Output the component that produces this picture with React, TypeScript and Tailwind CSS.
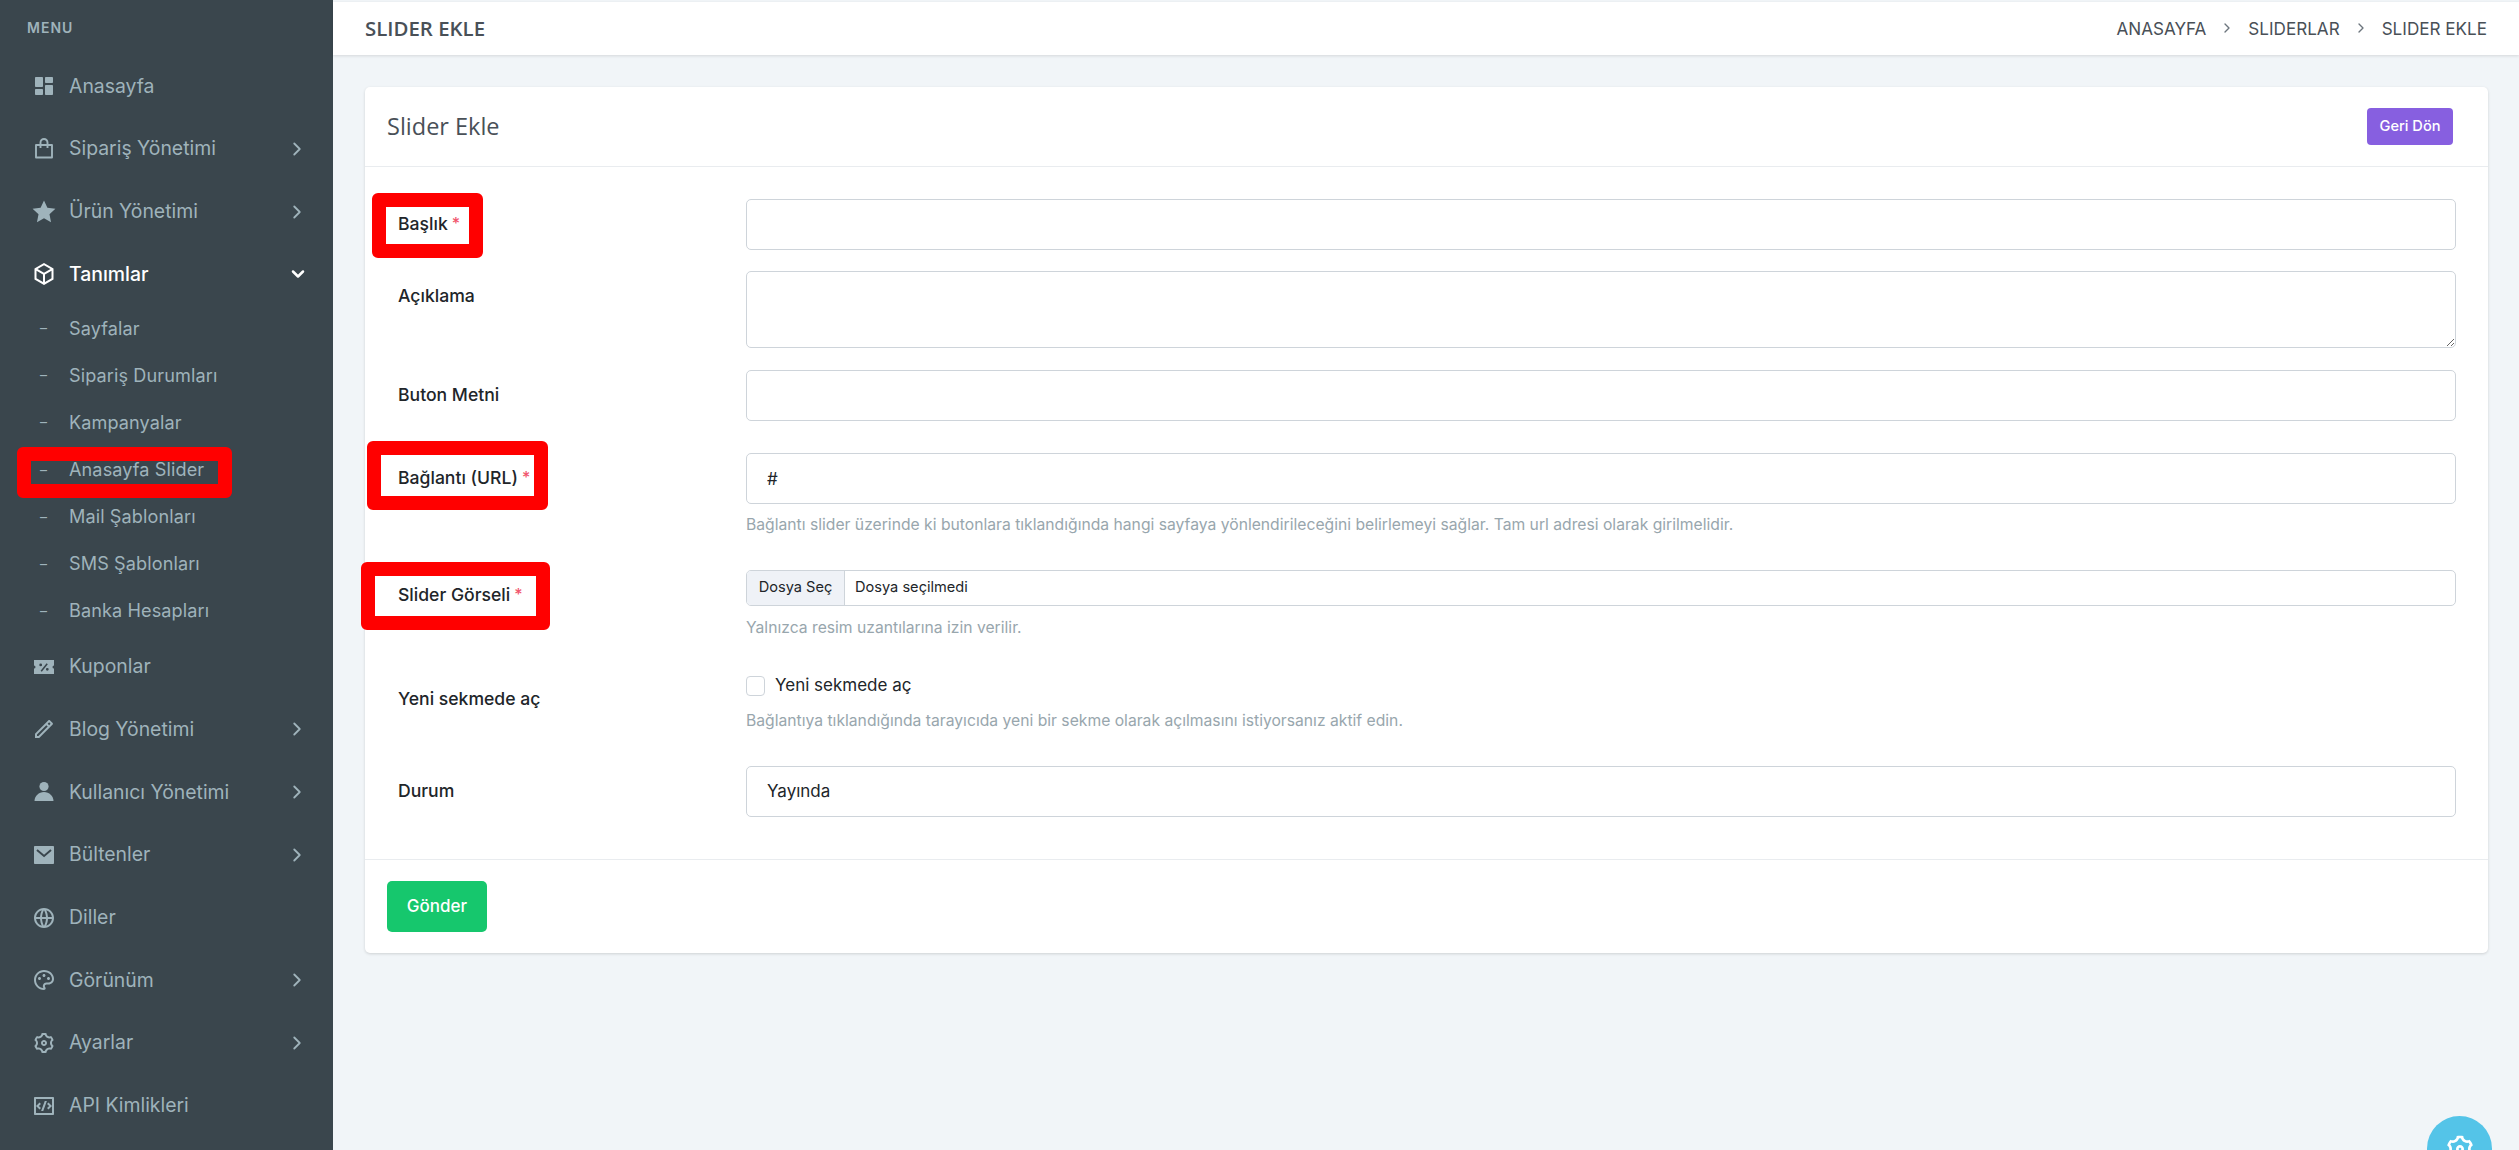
import React from 'react';
import { ChevronRight, ChevronDown } from 'lucide-react';
import {
  RiDashboardFill, RiStarFill, RiBox3Line, RiPencilLine,
  RiMailFill, RiGlobalLine, RiPaletteLine, RiSettings3Line, RiCodeBoxLine,
} from 'react-icons/ri';

type Item = { label: string; icon?: React.ElementType; chevron?: boolean; open?: boolean; sub?: boolean; boxed?: boolean };

const BagIcon = ({ size = 24, className }: { size?: number; className?: string }) => (
  <svg width={size} height={size} viewBox="0 0 24 24" fill="none" stroke="currentColor" strokeWidth="1.9" className={className}>
    <path d="M4 8h16v12.5H4z" strokeLinejoin="round" />
    <path d="M8.5 11V5.5a3.5 3.5 0 0 1 7 0V11" />
  </svg>
);

const CouponIcon = ({ size = 24, className }: { size?: number; className?: string }) => (
  <svg width={size} height={size} viewBox="0 0 24 24" fill="currentColor" className={className}>
    <path fillRule="evenodd" d="M2 5h20v5.5a1.5 1.5 0 0 0 0 3V19H2v-5.5a1.5 1.5 0 0 0 0-3V5zm12.6 3.2L8.6 15.8l1.2 1 6-7.6-1.2-1zM8.7 8.5a1.4 1.4 0 1 0 0 2.8 1.4 1.4 0 0 0 0-2.8zm6.6 4.4a1.4 1.4 0 1 0 0 2.8 1.4 1.4 0 0 0 0-2.8z" />
  </svg>
);

const UserIcon = ({ size = 24, className }: { size?: number; className?: string }) => (
  <svg width={size} height={size} viewBox="0 0 24 24" fill="currentColor" className={className}>
    <circle cx="12" cy="6.5" r="4.6" />
    <path d="M2.5 21c0-5 4.3-9 9.5-9s9.5 4 9.5 9H2.5z" />
  </svg>
);

const menu: Item[] = [
  { label: 'Anasayfa', icon: RiDashboardFill },
  { label: 'Sipariş Yönetimi', icon: BagIcon, chevron: true },
  { label: 'Ürün Yönetimi', icon: RiStarFill, chevron: true },
  { label: 'Tanımlar', icon: RiBox3Line, chevron: true, open: true },
  { label: 'Sayfalar', sub: true },
  { label: 'Sipariş Durumları', sub: true },
  { label: 'Kampanyalar', sub: true },
  { label: 'Anasayfa Slider', sub: true, boxed: true },
  { label: 'Mail Şablonları', sub: true },
  { label: 'SMS Şablonları', sub: true },
  { label: 'Banka Hesapları', sub: true },
  { label: 'Kuponlar', icon: CouponIcon },
  { label: 'Blog Yönetimi', icon: RiPencilLine, chevron: true },
  { label: 'Kullanıcı Yönetimi', icon: UserIcon, chevron: true },
  { label: 'Bültenler', icon: RiMailFill, chevron: true },
  { label: 'Diller', icon: RiGlobalLine },
  { label: 'Görünüm', icon: RiPaletteLine, chevron: true },
  { label: 'Ayarlar', icon: RiSettings3Line, chevron: true },
  { label: 'API Kimlikleri', icon: RiCodeBoxLine },
];

const MenuRow = ({ item }: { item: Item }) => {
  if (item.sub) {
    return (
      <div className="relative flex h-[47.1px] items-center pb-[2px] pl-[40px] text-[18.1px] tracking-[0.1px] text-[#9fb3bb]">
        <span className="w-[29px] text-[14px] leading-none">–</span>
        <span>{item.label}</span>
        {item.boxed && (
          <div className="absolute left-[17px] top-[0px] h-[51px] w-[215px] rounded-[6px] border-[14px] border-[#ff0000]" />
        )}
      </div>
    );
  }
  const Icon = item.icon!;
  return (
    <div className={`flex h-[62.7px] items-center pl-[32px] pr-[25px] text-[19.4px] ${item.open ? 'font-medium text-white' : 'text-[#9fb3bb]'}`}>
      <Icon size={24} className="mr-[13px] shrink-0" />
      <span className="flex-1">{item.label}</span>
      {item.chevron && (item.open ? <ChevronDown size={20} strokeWidth={3} /> : <ChevronRight size={22} strokeWidth={2} />)}
    </div>
  );
};

const Label = ({ text, required, box, className }: { text: string; required?: boolean; box?: string; className?: string }) => (
  <label className={`relative flex h-[51px] w-[381px] shrink-0 items-center pl-[33px] text-[17.6px] font-medium text-[#212529] ${className ?? ''}`}>
    <span>{text}</span>
    {required && <span className="ml-[4px] -mt-[3px] text-[16px] text-[#f1556c]">*</span>}
    {box && <div className={`absolute rounded-[6px] border-[14px] border-[#ff0000] ${box}`} />}
  </label>
);

const inputCls = 'h-[51px] w-full rounded-[5px] border border-[#ced4da] bg-white px-[20px] text-[17px] text-[#212529]';

const Help = ({ children, className }: { children: React.ReactNode; className: string }) => (
  <p className={`h-[20px] whitespace-nowrap text-[15.7px] leading-[20px] text-[#98a6ad] ${className}`}>{children}</p>
);

export default function App() {
  return (
    <div className="flex h-screen w-full overflow-hidden bg-[#f1f5f8] font-['Inter',sans-serif]">
      <aside className="h-full w-[333px] shrink-0 bg-[#3a464d]">
        <div className="flex h-[55px] items-center pl-[27px] text-[14px] font-semibold tracking-[1px] text-[#9fb3bb]">MENU</div>
        {menu.map((item) => (
          <MenuRow key={item.label} item={item} />
        ))}
      </aside>

      <main className="relative min-w-0 flex-1">
        <header className="mt-[2px] flex h-[53px] items-center justify-between bg-white pl-[32px] pr-[32px] shadow-[0_1px_3px_rgba(0,0,0,0.12)]">
          <h1 className="font-['Open_Sans',sans-serif] text-[20.4px] font-semibold text-[#495057]">SLIDER EKLE</h1>
          <nav className="flex items-center text-[17.1px] text-[#495057]">
            <span>ANASAYFA</span>
            <ChevronRight size={16} className="mx-[13px] text-[#6c757d]" />
            <span>SLIDERLAR</span>
            <ChevronRight size={16} className="mx-[13px] text-[#6c757d]" />
            <span>SLIDER EKLE</span>
          </nav>
        </header>

        <section className="ml-[32px] mr-[31px] mt-[32px] rounded-[5px] bg-white shadow-[0_1px_3px_rgba(0,0,0,0.15)]">
          <div className="flex h-[80px] items-center justify-between border-b border-[#e9ecef] pl-[22px] pr-[35px]">
            <h2 className="font-['Open_Sans',sans-serif] text-[23.5px] font-medium text-[#495057]">Slider Ekle</h2>
            <button className="h-[37px] w-[86px] rounded-[4px] bg-[#875fe0] text-[14.6px] font-medium text-white">Geri Dön</button>
          </div>

          <form className="pb-[42px] pr-[32px] pt-[32px]">
            <div className="mb-[21px] flex">
              <Label text="Başlık" required box="left-[7px] top-[-6px] h-[65px] w-[111px]" />
              <input className={inputCls} />
            </div>
            <div className="mb-[22px] flex">
              <Label text="Açıklama" />
              <textarea className={`${inputCls} h-[77px]`} />
            </div>
            <div className="mb-[32px] flex">
              <Label text="Buton Metni" />
              <input className={inputCls} />
            </div>
            <div className="mb-[35px] flex">
              <Label text="Bağlantı (URL)" required box="left-[2px] top-[-12px] h-[69px] w-[181px]" />
              <div className="min-w-0 flex-1">
                <input className={inputCls} defaultValue="#" />
                <Help className="mt-[11px]">Bağlantı slider üzerinde ki butonlara tıklandığında hangi sayfaya yönlendirileceğini belirlemeyi sağlar. Tam url adresi olarak girilmelidir.</Help>
              </div>
            </div>
            <div className="mb-[34px] flex">
              <Label text="Slider Görseli" required box="left-[-4px] top-[-8px] h-[68px] w-[189px]" />
              <div className="min-w-0 flex-1">
                <div className="flex h-[36px] items-center overflow-hidden rounded-[5px] border border-[#ced4da] text-[14.6px] text-[#212529]">
                  <span className="flex h-full w-[98px] items-center justify-center border-r border-[#ced4da] bg-[#eff2f7]">Dosya Seç</span>
                  <span className="pl-[10px]">Dosya seçilmedi</span>
                </div>
                <Help className="mt-[12px]">Yalnızca resim uzantılarına izin verilir.</Help>
              </div>
            </div>
            <div className="mb-[35px] flex">
              <Label text="Yeni sekmede aç" className="pt-[3px]" />
              <div className="min-w-0 flex-1">
                <div className="flex h-[28px] items-center text-[17px] text-[#212529]">
                  <span className="mr-[10px] h-[20px] w-[19px] rounded-[4px] border border-[#ced4da]" />
                  Yeni sekmede aç
                </div>
                <Help className="mt-[11px]">Bağlantıya tıklandığında tarayıcıda yeni bir sekme olarak açılmasını istiyorsanız aktif edin.</Help>
              </div>
            </div>
            <div className="flex">
              <Label text="Durum" />
              <div className={`${inputCls} flex items-center`}>Yayında</div>
            </div>
          </form>

          <div className="border-t border-[#e9ecef] px-[22px] py-[21px]">
            <button className="h-[51px] w-[100px] rounded-[5px] bg-[#16c76d] text-[17px] font-medium text-white">Gönder</button>
          </div>
        </section>

        <div className="absolute left-[2094px] top-[1116px] flex h-[65px] w-[65px] items-center justify-center rounded-full bg-[#54c4e8] text-white">
          <RiSettings3Line size={32} />
        </div>
      </main>
    </div>
  );
}
